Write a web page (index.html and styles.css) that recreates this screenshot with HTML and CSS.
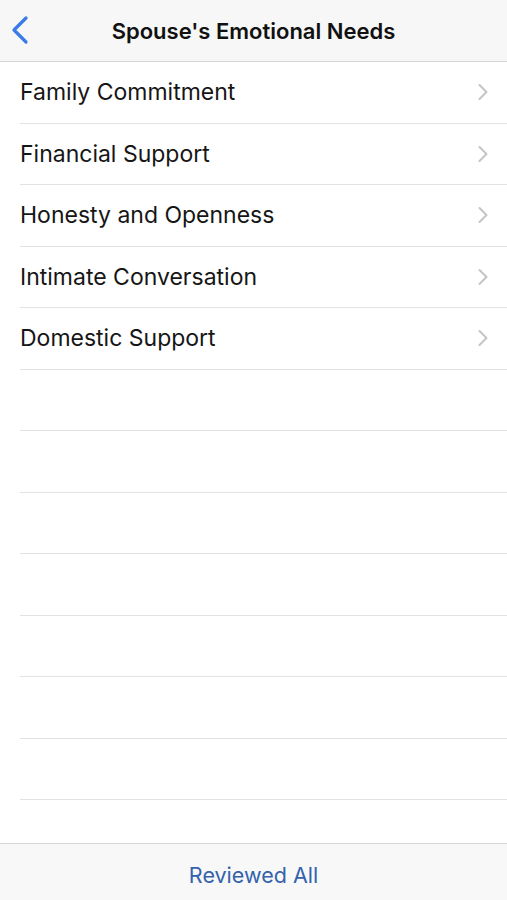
FILE: index.html
```html
<!DOCTYPE html>
<html lang="en">
<head>
  <meta charset="UTF-8">
  <title>Spouse's Emotional Needs</title>
  <link rel="stylesheet" href="styles.css">
</head>
<body>

<div class="screen">
  <header class="navbar">
    <a class="back" href="#">
      <svg width="18" height="30" viewBox="0 0 18 30">
        <path d="M15 3 L3 15 L15 27" fill="none" stroke="#3a7bea" stroke-width="3.2" stroke-linecap="round" stroke-linejoin="round"/>
      </svg>
    </a>
    <h1>Spouse's Emotional Needs</h1>
  </header>

  <ul class="list">
    <li class="row"><span>Family Commitment</span><svg class="chevron" width="12" height="18" viewBox="0 0 12 18"><path d="M2.5 2 L9.5 9 L2.5 16"/></svg></li>
    <li class="row"><span>Financial Support</span><svg class="chevron" width="12" height="18" viewBox="0 0 12 18"><path d="M2.5 2 L9.5 9 L2.5 16"/></svg></li>
    <li class="row"><span>Honesty and Openness</span><svg class="chevron" width="12" height="18" viewBox="0 0 12 18"><path d="M2.5 2 L9.5 9 L2.5 16"/></svg></li>
    <li class="row"><span>Intimate Conversation</span><svg class="chevron" width="12" height="18" viewBox="0 0 12 18"><path d="M2.5 2 L9.5 9 L2.5 16"/></svg></li>
    <li class="row"><span>Domestic Support</span><svg class="chevron" width="12" height="18" viewBox="0 0 12 18"><path d="M2.5 2 L9.5 9 L2.5 16"/></svg></li>
    <li class="row"></li>
    <li class="row"></li>
    <li class="row"></li>
    <li class="row"></li>
    <li class="row"></li>
    <li class="row"></li>
    <li class="row"></li>
  </ul>

  <footer class="toolbar">
    <a href="#">Reviewed All</a>
  </footer>
</div>

</body>
</html>
```

FILE: styles.css
```css
* {
  box-sizing: border-box;
}
body {
  margin: 0;
  font-family: "Inter", "Liberation Sans", sans-serif;
  background: #fff;
  color: #111;
}
.screen {
  height: 900px;
  display: flex;
  flex-direction: column;
}
.navbar {
  height: 62px;
  background: #f7f7f7;
  border-bottom: 1px solid #d4d4d4;
  display: flex;
  align-items: center;
  justify-content: center;
  position: relative;
}
.navbar h1 {
  margin: 0;
  font-size: 22px;
  font-weight: 600;
}
.back {
  position: absolute;
  left: 11px;
  top: 15px;
  display: block;
  line-height: 0;
}
.list {
  list-style: none;
  margin: 0;
  padding: 0 0 0 20px;
  flex: 1;
}
.row {
  height: 61.5px;
  border-bottom: 1px solid #e2e2e2;
  display: flex;
  align-items: center;
  justify-content: space-between;
  padding-right: 18px;
  font-size: 23px;
  color: #161616;
}
.chevron {
  fill: none;
  stroke: #c4c4c8;
  stroke-width: 2;
  stroke-linecap: round;
  stroke-linejoin: round;
}
.toolbar {
  height: 57px;
  padding-top: 5px;
  background: #f8f8f8;
  border-top: 1px solid #d4d4d4;
  display: flex;
  align-items: center;
  justify-content: center;
}
.toolbar a {
  color: #3462ad;
  font-size: 21.5px;
  text-decoration: none;
}
```
